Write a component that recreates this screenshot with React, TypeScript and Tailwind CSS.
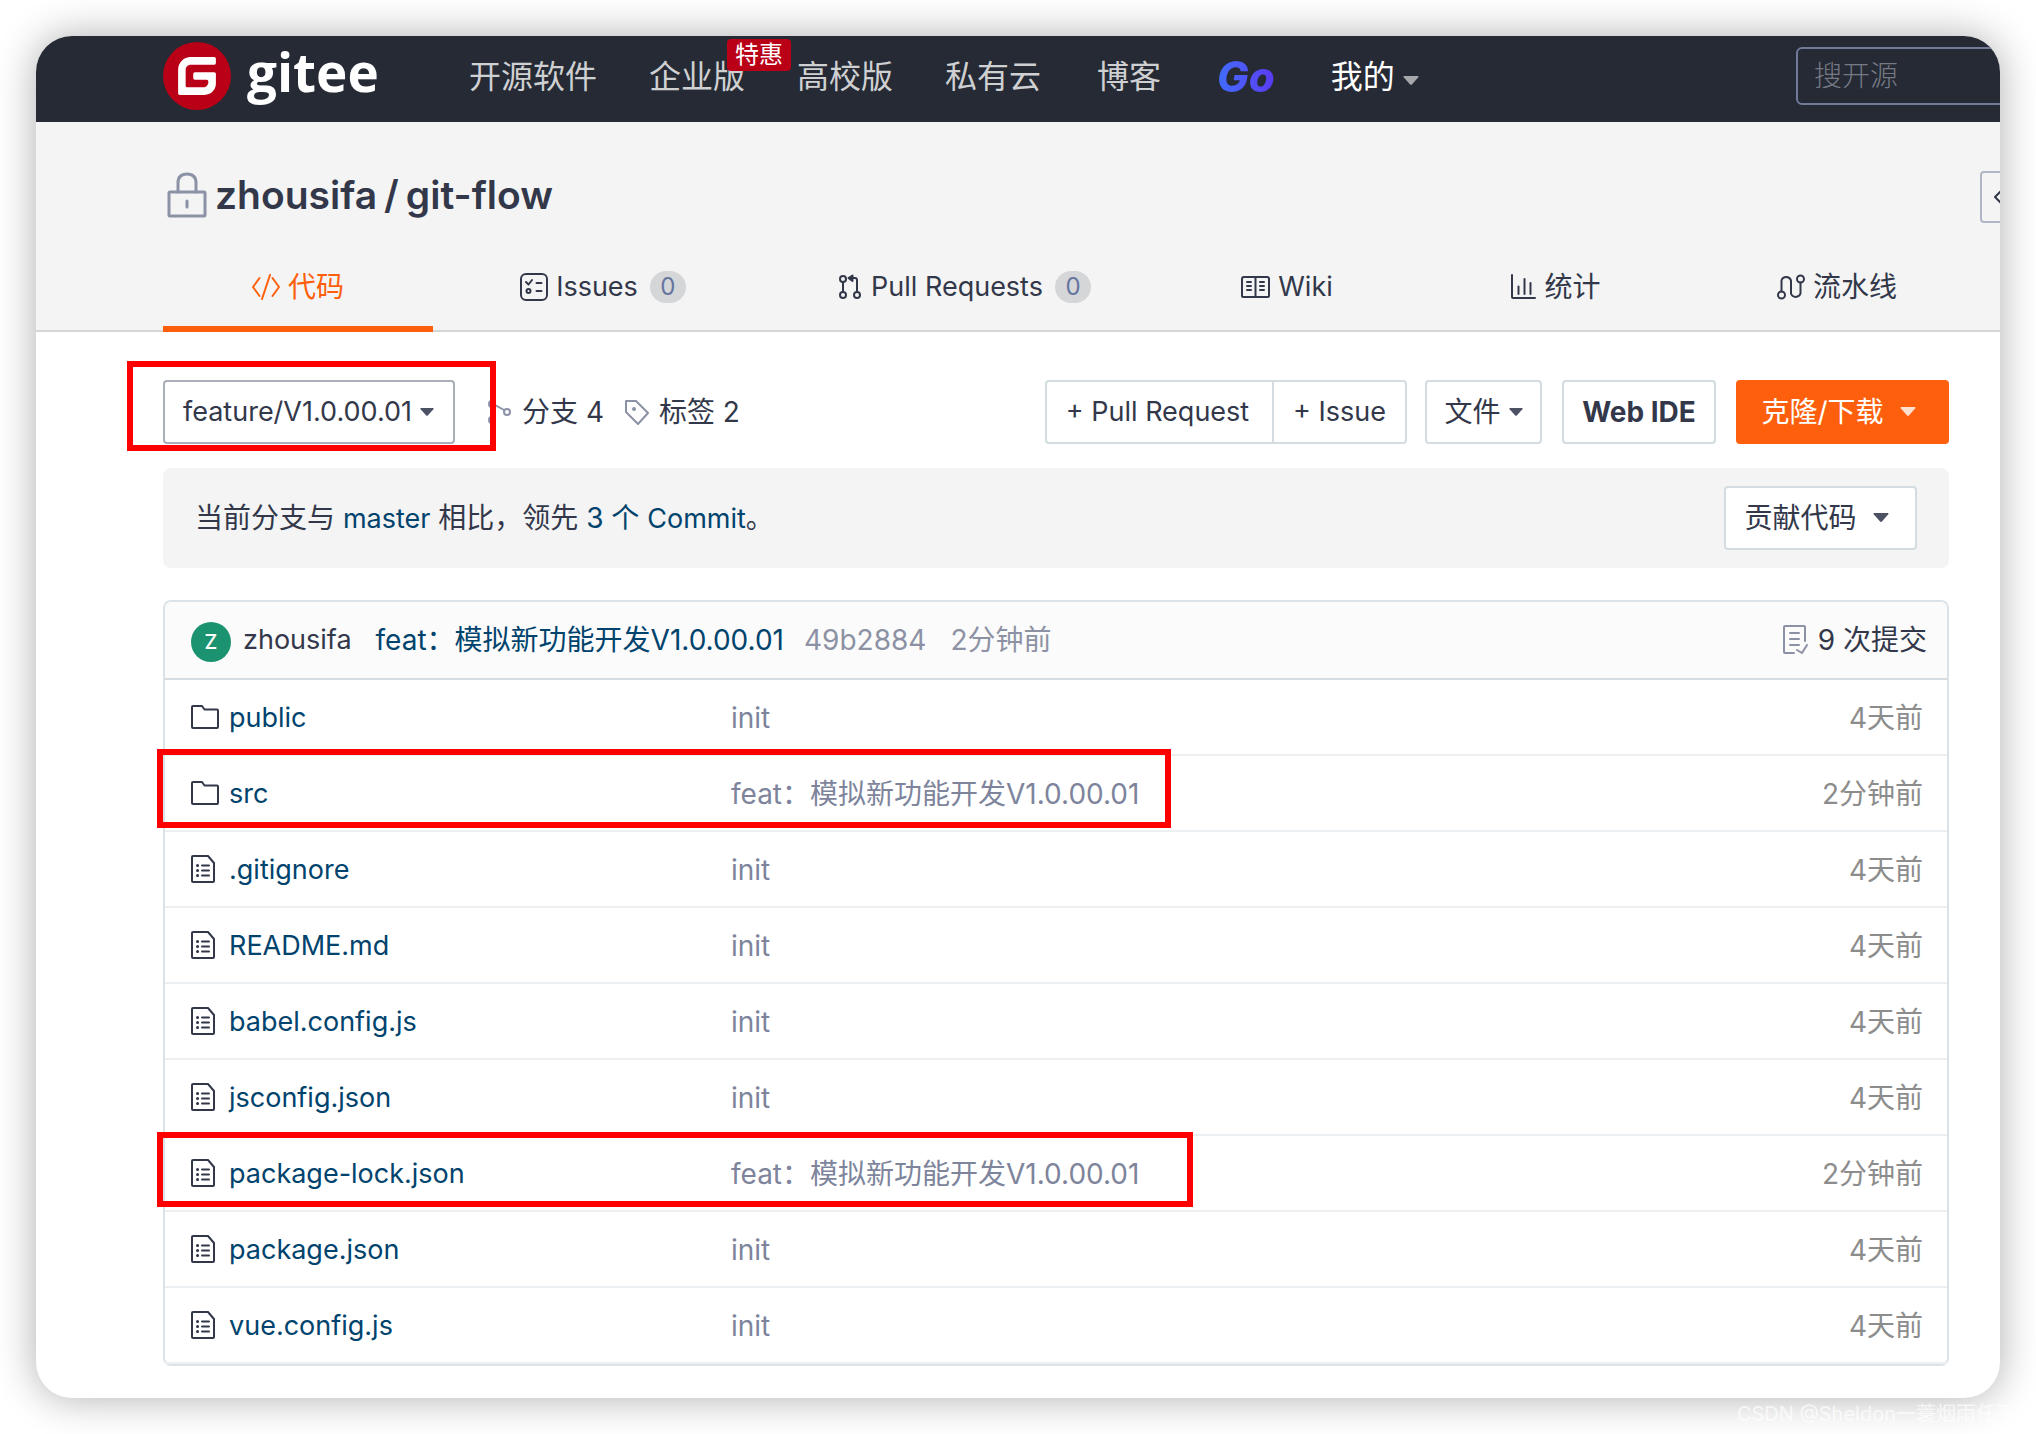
import type { ReactNode } from "react";

interface FileRow {
  name: string;
  type: "folder" | "file";
  message: string;
  time: string;
  // Clases del recuadro rojo, solo en filas marcadas
  mark?: string;
}

const FEATURE_COMMIT = "feat：模拟新功能开发V1.0.00.01";

const files: FileRow[] = [
  { name: "public", type: "folder", message: "init", time: "4天前" },
  {
    name: "src",
    type: "folder",
    message: FEATURE_COMMIT,
    time: "2分钟前",
    mark: "-top-[7px] h-[79px] w-[1014px]",
  },
  { name: ".gitignore", type: "file", message: "init", time: "4天前" },
  { name: "README.md", type: "file", message: "init", time: "4天前" },
  { name: "babel.config.js", type: "file", message: "init", time: "4天前" },
  { name: "jsconfig.json", type: "file", message: "init", time: "4天前" },
  {
    name: "package-lock.json",
    type: "file",
    message: FEATURE_COMMIT,
    time: "2分钟前",
    mark: "-top-1 h-[75px] w-[1036px]",
  },
  { name: "package.json", type: "file", message: "init", time: "4天前" },
  { name: "vue.config.js", type: "file", message: "init", time: "4天前" },
];

function Caret({ className = "w-[14px] text-[#4c5163]" }: { className?: string }) {
  return (
    <svg
      viewBox="0 0 14 8"
      fill="currentColor"
      aria-hidden="true"
      className={`shrink-0 ${className}`}
    >
      <path d="M1 0h12q1 .3.4 1.200L8 7.300q-1 1-2 0L.6 1.200Q0 .3 1 0z" />
    </svg>
  );
}

function Icon({
  children,
  w,
  h,
  className = "",
}: {
  children: ReactNode;
  w: number;
  h: number;
  className?: string;
}) {
  return (
    <svg
      width={w}
      height={h}
      viewBox={`0 0 ${w} ${h}`}
      fill="none"
      stroke="currentColor"
      strokeWidth="2"
      strokeLinecap="round"
      strokeLinejoin="round"
      aria-hidden="true"
      className={`shrink-0 ${className}`}
    >
      {children}
    </svg>
  );
}

function GiteeLogo() {
  return (
    <svg viewBox="0 0 24 24" className="size-[68px]" aria-hidden="true">
      <circle cx="12" cy="12" r="12" fill="#b90017" />
      <path
        fill="#fff"
        d="M18.074 5.333c.328 0 .593.266.592.593v1.482a.594.594 0 0 1-.593.592H9.777c-.982 0-1.778.796-1.778 1.778v5.63c0 .327.266.592.593.592h5.63c.982 0 1.778-.796 1.778-1.778v-.296a.593.593 0 0 0-.592-.593h-4.15a.592.592 0 0 1-.592-.592v-1.482a.593.593 0 0 1 .593-.592h6.815c.327 0 .593.265.593.592v3.408a4 4 0 0 1-4 4H5.926a.593.593 0 0 1-.593-.593V9.778a4.444 4.444 0 0 1 4.445-4.444h8.296Z"
      />
    </svg>
  );
}

function FolderIcon() {
  return (
    <Icon w={28} h={24} className="-mt-[2px]">
      <path d="M1 22V2q0-1 1-1h9l2.500 3.500H26q1 0 1 1V22q0 1-1 1H2q-1 0-1-1z" />
    </Icon>
  );
}

function FileIcon() {
  return (
    <Icon w={24} h={28} className="-mt-[2px]">
      <path d="M1 26V2q0-1 1-1h15l6 7v18q0 1-1 1H2q-1 0-1-1z" />
      <path d="M11 10.500h7M11 15.500h7M11 20.500h7" />
      <path d="M6.500 10.500h.1M6.500 15.500h.1M6.500 20.500h.1" strokeWidth="3" />
    </Icon>
  );
}

function CodeIcon() {
  return (
    <Icon w={28} h={26}>
      <path d="M7.500 4 1 13l6.500 9M20.500 4 27 13l-6.500 9M18 1l-8 24" />
    </Icon>
  );
}

function IssueIcon() {
  return (
    <Icon w={28} h={28}>
      <rect x="1" y="1" width="26" height="26" rx="5" />
      <path d="m6 9 2.500 2.500L12 7M16.500 10h5M16.500 18h5" />
      <circle cx="8.500" cy="18" r="2" />
    </Icon>
  );
}

function PullIcon() {
  return (
    <Icon w={24} h={26}>
      <circle cx="4" cy="5" r="3" />
      <circle cx="4" cy="21" r="3" />
      <circle cx="18" cy="21" r="3" />
      <path d="M4 8v10M18 18V6q0-2-2-2h-5" />
      <path d="m13.500 1.500-4 2.500 4 3z" fill="currentColor" />
    </Icon>
  );
}

function WikiIcon() {
  return (
    <Icon w={29} h={22}>
      <path d="M1 20V3q0-2 2-2h23q2 0 2 2v17q0 1-1 1H2q-1 0-1-1zM14.500 2v18" />
      <path d="M6 6h4M6 10h4M6 14h4M19 6h4M19 10h4M19 14h4" />
    </Icon>
  );
}

function StatsIcon() {
  return (
    <Icon w={25} h={26}>
      <path d="M1 1v22q0 1 1 1h22M7.500 12.500V20M13.500 5v15M19.500 9v11" />
    </Icon>
  );
}

function PipelineIcon() {
  return (
    <Icon w={28} h={26}>
      <circle cx="4.500" cy="21" r="3.500" />
      <circle cx="23.500" cy="5" r="3.500" />
      <path d="M4.500 17.500V6.500a5 5 0 0 1 9.500 0v13a5 5 0 0 0 9.500 0v-11" />
    </Icon>
  );
}

function Tab({
  icon,
  label,
  count,
  active = false,
  latin = false,
}: {
  icon: ReactNode;
  label: string;
  count?: number;
  active?: boolean;
  latin?: boolean;
}) {
  return (
    <a
      href="#"
      className={`flex h-[92px] items-center justify-center gap-2 border-b-6 pt-2 ${
        active
          ? "border-[#fe5f0c] text-[#fe5f0c]"
          : "border-transparent text-[#32384a]"
      }`}
    >
      {icon}
      <span className={latin ? "text-[27px]" : ""}>{label}</span>
      {count !== undefined && (
        <span className="ml-1 flex h-8 w-9 items-center justify-center rounded-full bg-[#d5d6d8] text-2xl text-[#66759f]">
          {count}
        </span>
      )}
    </a>
  );
}

const toolButton =
  "flex h-16 items-center justify-center rounded-sm border-2 border-[#d3dde1] bg-white text-[#32384a]";

export default function App() {
  return (
    <div className="relative bg-white p-9 font-[Inter,'Noto_Sans_CJK_SC',sans-serif] text-[28px] leading-10 text-[#32384a]">
      <main className="overflow-hidden rounded-[36px] bg-white shadow-[0_0_40px_rgba(0,0,0,0.32)]">
        {/* Barra superior */}
        <header className="flex h-[86px] items-start bg-[#252a35] pl-[127px] text-[32px] text-[#cfd0d2]">
          <a href="#" className="flex items-start gap-4 pt-[6px] text-white">
            <GiteeLogo />
            <span className="w-[134px] font-['Open_Sans',sans-serif] text-[53px] leading-[60px] font-bold">
              gitee
            </span>
          </a>
          <nav className="ml-[88px] flex h-[82px] items-center gap-[52px] whitespace-nowrap">
            <a href="#">开源软件</a>
            <a href="#" className="relative">
              企业版
              <span className="absolute -top-[18px] left-[78px] rounded-sm bg-[#b90017] px-2 text-2xl leading-8 text-white">
                特惠
              </span>
            </a>
            <a href="#">高校版</a>
            <a href="#">私有云</a>
            <a href="#" className="ml-1">
              博客
            </a>
            <a
              href="#"
              className="ml-1 bg-linear-to-r from-[#3f6cff] to-[#5a34ee] bg-clip-text pr-1 text-[42px] font-extrabold text-transparent italic"
            >
              Go
            </a>
            <button type="button" className="flex items-center gap-2 text-white">
              我的
              <Caret className="mt-2 w-4 text-[#a5a7ab]" />
            </button>
          </nav>
          <input
            type="search"
            aria-label="搜开源"
            placeholder="搜开源"
            className="mt-[11px] -mr-20 ml-auto h-[58px] w-[284px] shrink-0 rounded-md border-2 border-[#717b98] bg-transparent px-4 text-[28px] font-light placeholder:text-[#757984]"
          />
        </header>

        {/* Cabecera del repositorio */}
        <section className="border-b-2 border-[#d5d6d8] bg-[#f4f4f4] pl-[127px]">
          <div className="flex h-[118px] items-center pt-8">
            <Icon w={44} h={46} className="mb-1 text-[#8c92a6]">
              <rect x="6" y="20" width="36" height="24" rx="1" strokeWidth="3" />
              <path d="M15 20v-9q0-9 9-9t9 9v9M24 29v6" strokeWidth="3" />
            </Icon>
            <h1 className="mb-1 ml-2 flex gap-[7px] text-[39px] font-semibold">
              <a href="#">zhousifa</a>
              <span>/</span>
              <a href="#">git-flow</a>
            </h1>
            <button
              type="button"
              aria-label="代码"
              className="-mr-9 ml-auto flex h-[52px] w-14 items-center rounded-sm border-2 border-[#b1b6c6] pl-3"
            >
              <Icon w={24} h={16}>
                <path d="M7 2 1 8l6 6M17 2l6 6-6 6" />
              </Icon>
            </button>
          </div>
          <nav className="-mb-[2px] grid grid-cols-[270px_340px_384px_260px_278px_284px]">
            <Tab icon={<CodeIcon />} label="代码" active />
            <Tab icon={<IssueIcon />} label="Issues" count={0} latin />
            <Tab icon={<PullIcon />} label="Pull Requests" count={0} latin />
            <Tab icon={<WikiIcon />} label="Wiki" latin />
            <Tab icon={<StatsIcon />} label="统计" />
            <Tab icon={<PipelineIcon />} label="流水线" />
          </nav>
        </section>

        <section className="pt-12 pr-[51px] pb-8 pl-[127px]">
          {/* Herramientas de la rama */}
          <div className="flex items-center whitespace-nowrap">
            <div className="relative">
              <button
                type="button"
                className="flex h-16 w-[292px] items-center gap-2 rounded-sm border-2 border-[#a9aeb8] pl-[18px] text-[27px]"
              >
                feature/V1.0.00.01
                <Caret />
              </button>
              <span className="pointer-events-none absolute -top-[19px] -left-9 z-10 h-[90px] w-[369px] border-6 border-[#fe0000]" />
            </div>
            <a href="#" className="ml-8 flex items-center gap-[10px]">
              <Icon w={25} h={24} className="text-[#8c92a6]">
                <circle cx="5" cy="4" r="3" />
                <circle cx="5" cy="20" r="3" />
                <circle cx="20" cy="12" r="3" />
                <path d="M5 7v10M8 5l9 5" />
              </Icon>
              分支 4
            </a>
            <a href="#" className="ml-5 flex items-center gap-[10px]">
              <Icon w={25} h={26} className="text-[#8c92a6]">
                <path d="M2 2h10l12 12-10 11L2 13z" />
                <circle cx="10" cy="10" r="1" />
              </Icon>
              标签 2
            </a>
            <div className="ml-auto flex text-[27px]">
              <button
                type="button"
                className={`${toolButton} w-[229px] rounded-r-none pr-1`}
              >
                + Pull Request
              </button>
              <button
                type="button"
                className={`${toolButton} -ml-[2px] w-[135px] rounded-l-none`}
              >
                + Issue
              </button>
            </div>
            <button
              type="button"
              className={`${toolButton} ml-[18px] w-[117px] gap-2`}
            >
              文件
              <Caret />
            </button>
            <button
              type="button"
              className={`${toolButton} ml-5 w-[154px] font-bold`}
            >
              Web IDE
            </button>
            <button
              type="button"
              className="ml-5 flex h-16 w-[213px] items-center justify-center gap-4 rounded-sm bg-[#fe5f0c] pr-2 text-white"
            >
              克隆/下载
              <Caret className="w-4 text-[#ffdfce]" />
            </button>
          </div>

          {/* Comparación con master */}
          <div className="mt-6 flex h-[100px] items-center justify-between rounded-lg bg-[#f4f4f4] px-8">
            <p>
              当前分支与{" "}
              <a href="#" className="text-[27px] text-[#00436d]">
                master
              </a>{" "}
              相比，领先{" "}
              <a href="#" className="text-[#00436d]">
                3 个 <span className="text-[27px]">Commit</span>
              </a>
              。
            </p>
            <button
              type="button"
              className={`${toolButton} w-[193px] gap-4 pr-2`}
            >
              贡献代码
              <Caret className="w-4 text-[#4c5163]" />
            </button>
          </div>

          {/* Lista de archivos */}
          <div className="mt-8 rounded-lg border-2 border-[#dce3e8]">
            <div className="flex h-[78px] items-center rounded-t-md border-b-2 border-[#d5dde2] bg-[#fbfbfb] pr-5 pl-[26px] whitespace-nowrap">
              <span className="mt-1 flex size-10 items-center justify-center rounded-full bg-[#1c9370] text-xl font-medium text-white">
                Z
              </span>
              <a href="#" className="ml-3 text-[27px]">
                zhousifa
              </a>
              <a href="#" className="ml-6 text-[#00436d]">
                {FEATURE_COMMIT}
              </a>
              <span className="ml-5 text-[#8c92a4]">49b2884</span>
              <span className="ml-6 text-[#8c92a4]">2分钟前</span>
              <a href="#" className="ml-auto flex items-center gap-[10px]">
                <Icon w={25} h={30} className="text-[#8c92a6]">
                  <path d="M22 16V2q0-1-1-1H2Q1 1 1 2v25q0 1 1 1h9" />
                  <path d="M7 8h9M7 14h9M7 20h9M14 25l5 3 5-8" />
                </Icon>
                9 次提交
              </a>
            </div>
            <table className="w-full table-fixed border-separate border-spacing-0">
              <tbody>
                {files.map((file) => (
                  <tr
                    key={file.name}
                    className="h-[76px] *:border-b-2 *:border-[#ecf0f3] *:pt-[2px]"
                  >
                    <td className="relative w-[566px] pl-[26px]">
                      <a
                        href="#"
                        className="flex items-center gap-[10px] text-[27px] text-[#00436d]"
                      >
                        <span className="w-7 text-[#32384a]">
                          {file.type === "folder" ? <FolderIcon /> : <FileIcon />}
                        </span>
                        {file.name}
                      </a>
                      {file.mark && (
                        <span
                          className={`pointer-events-none absolute -left-2 z-10 border-6 border-[#fe0000] ${file.mark}`}
                        />
                      )}
                    </td>
                    <td className="text-[#7d849b]">{file.message}</td>
                    <td className="w-[240px] pr-6 text-right text-[#8c8c8c]">
                      {file.time}
                    </td>
                  </tr>
                ))}
              </tbody>
            </table>
          </div>
        </section>
      </main>
      <p className="absolute right-0 bottom-1 text-xl leading-8 text-white/70">
        CSDN @Sheldon一蓑烟雨任平生
      </p>
    </div>
  );
}
